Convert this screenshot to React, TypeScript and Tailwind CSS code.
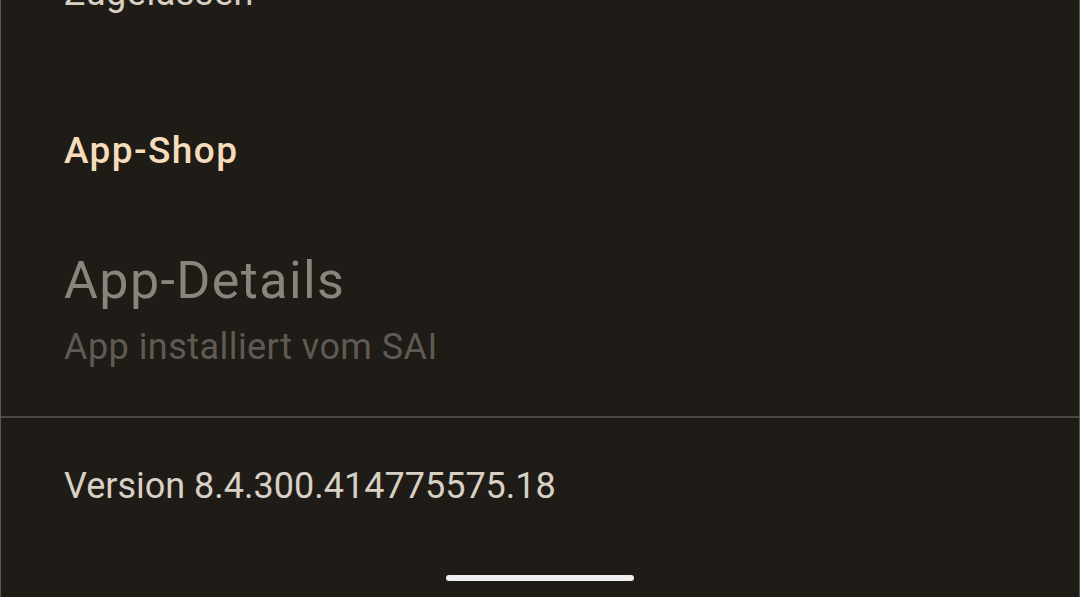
import React from 'react';

const font = { fontFamily: 'Roboto, "Noto Sans", sans-serif' };

const App = () => {
	return (
		<div
			className="w-[1080px] h-[597px] bg-[#1f1c17] border-x border-[#5d5952] overflow-hidden flex flex-col"
			style={font}
		>
			<div className="px-[63px]">
				<p className="mt-[-29px] text-[36px] leading-[44px] tracking-[0.5px] text-[#d8cfc3]">Zugelassen</p>
				<p className="mt-[114px] text-[37px] leading-[44px] font-medium tracking-[1.4px] text-[#f6dcbb]">App-Shop</p>
				<p className="mt-[78px] text-[52px] leading-[60px] tracking-[1.4px] text-[#8a847c]">App-Details</p>
				<p className="mt-[14px] text-[36px] leading-[44px] tracking-[0.45px] text-[#5f5a53]">App installiert vom SAI</p>
			</div>
			<div className="mt-[47px] h-[2px] bg-[#4c4842]" />
			<div className="px-[63px]">
				<p className="mt-[46px] text-[36px] leading-[44px] text-[#d8d0c5]">Version 8.4.300.414775575.18</p>
			</div>
			<div className="flex justify-center mt-[67px]">
				<div className="w-[188px] h-[6px] rounded-full bg-[#efefef]" />
			</div>
		</div>
	);
};

export default App;
